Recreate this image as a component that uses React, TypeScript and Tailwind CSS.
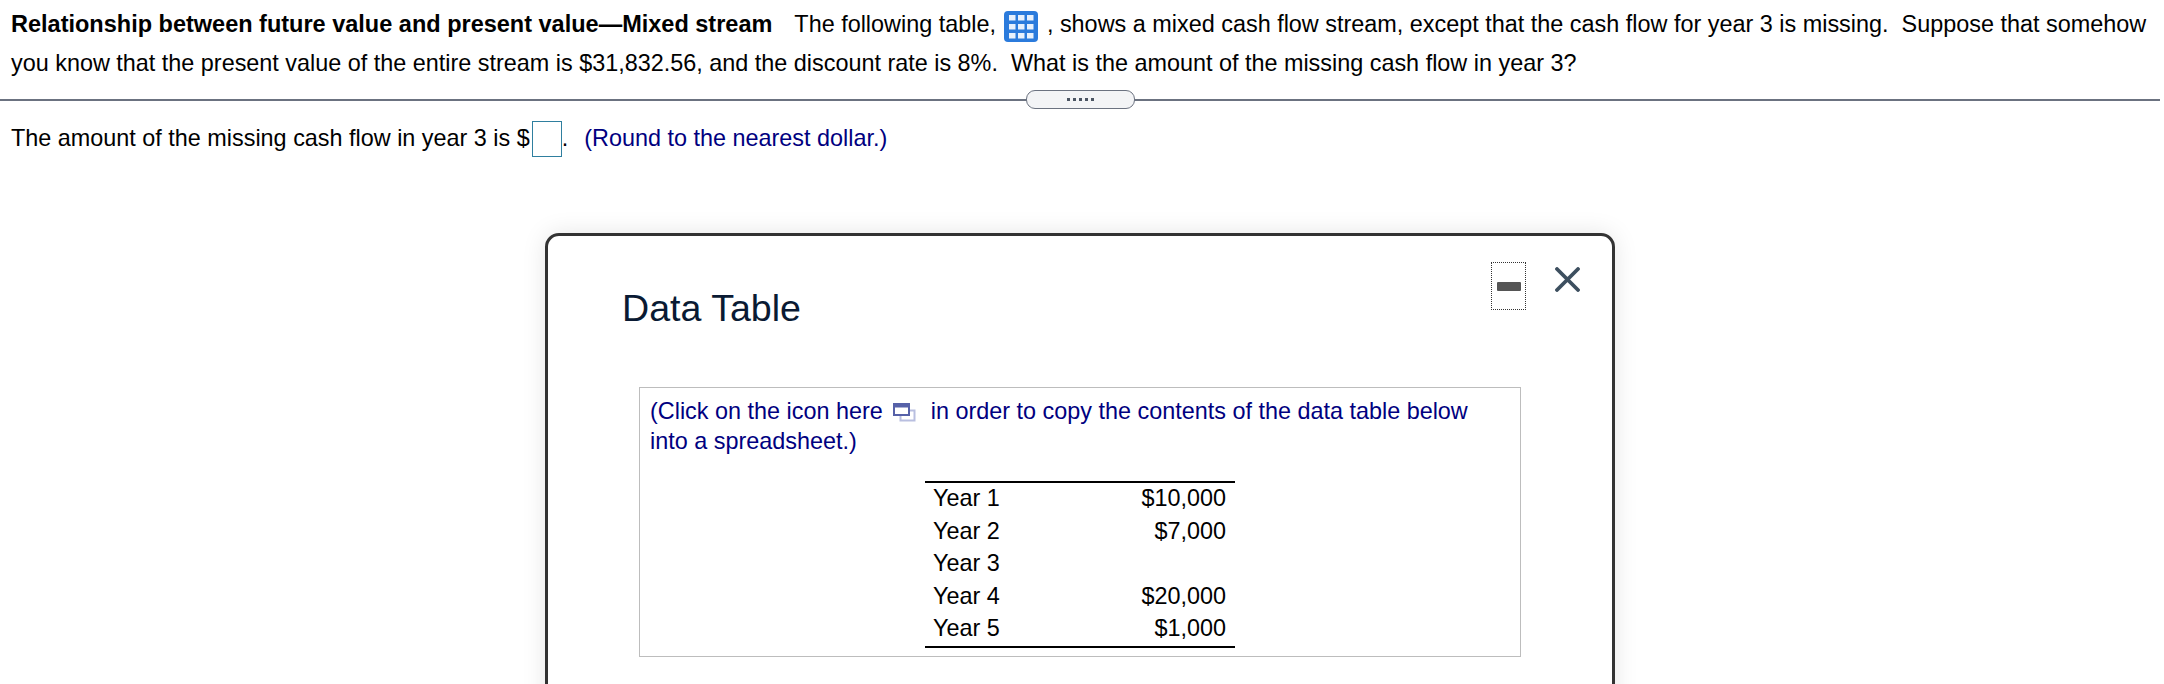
export default function App() {
  const rows = [
    ["Year 1", "$10,000"],
    ["Year 2", "$7,000"],
    ["Year 3", ""],
    ["Year 4", "$20,000"],
    ["Year 5", "$1,000"],
  ];
  return (
    <div className="h-[684px] w-[2164px] overflow-hidden bg-white font-['Liberation_Sans',Arial,sans-serif] text-[23.4px] text-black">
      <div className="whitespace-pre pl-[11px] pt-[5px] leading-[39px]">
        <div className="h-[39px]">
          <b className="text-[23.5px]">Relationship between future value and present value—Mixed stream</b>
          <span className="ml-[22px]">The following table,</span>
          <svg className="ml-[8px] mr-[9px] inline-block align-[-10px]" width="34" height="31" viewBox="0 0 34 31">
            <rect width="34" height="31" rx="4" fill="#2b7bdc" />
            {[4, 13, 22].map((y) =>
              [5, 14, 23].map((x) => <rect key={`${x}-${y}`} x={x} y={y} width="6.5" height="5.5" fill="#e8f1fc" />)
            )}
          </svg>
          <span className="text-[23.42px]">, shows a mixed cash flow stream, except that the cash flow for year 3 is missing.  Suppose that somehow</span>
        </div>
        <div className="h-[39px]">you know that the present value of the entire stream is $31,832.56, and the discount rate is 8%.  What is the amount of the missing cash flow in year 3?</div>
      </div>

      <div className="relative mt-[16px] mr-[4px] h-[2px] bg-[#6b7280]">
        <div className="absolute left-[1026px] top-[-9px] flex h-[19px] w-[109px] items-center justify-center gap-[3px] rounded-[9px] border border-[#6b7280] bg-[#f3f4f6]">
          {[0, 1, 2, 3, 4].map((i) => (
            <span key={i} className="h-[3px] w-[3px] bg-[#4b5563]" />
          ))}
        </div>
      </div>

      <div className="flex h-[36px] items-center pl-[11px] mt-[20px] whitespace-pre">
        <span>The amount of the missing cash flow in year 3 is $</span>
        <span className="ml-[2px] h-[36px] w-[30px] border border-[#2f7f9f] bg-white" />
        <span>.</span>
        <span className="ml-[16px] text-[#000080]">(Round to the nearest dollar.)</span>
      </div>

      <div className="ml-[545px] mt-[76px] h-[600px] w-[1070px] rounded-[14px] border-[3px] border-[#333333] bg-white shadow-[0_0_24px_rgba(0,0,0,0.1)]">
        <div className="flex h-[151px] items-start pl-[74px]">
          <h2 className="mt-[50px] w-[869px] text-[37.6px] leading-[44px] text-[#0a1a33]">Data Table</h2>
          <button className="mt-[26px] flex h-[48px] w-[35px] items-center justify-center border border-dotted border-[#333333]">
            <span className="h-[9px] w-[24px] rounded-[1px] bg-[#555555]" />
          </button>
          <svg className="ml-[29px] mt-[31px]" width="25" height="25" viewBox="0 0 25 25">
            <path d="M2 2 L23 23 M23 2 L2 23" stroke="#3d4f5f" strokeWidth="3.8" strokeLinecap="round" />
          </svg>
        </div>

        <div className="ml-[91px] h-[270px] w-[882px] border-[1.5px] border-[#bdbdbd] pl-[10px] pt-[8px]">
          <div className="text-[#000080] leading-[30px]">
            <div className="flex items-center whitespace-pre">
              <span>(Click on the icon here</span>
              <svg className="ml-[10px] mt-[3px]" width="23" height="19" viewBox="0 0 23 19">
                <rect x="7.5" y="7.5" width="14" height="10" fill="#fff" stroke="#b9bfe0" strokeWidth="2" />
                <rect x="1" y="1" width="15" height="11" fill="#fff" stroke="#5661a8" strokeWidth="2" />
                <rect x="1" y="1" width="15" height="3.5" fill="#5661a8" />
              </svg>
              <span className="ml-[15px]">in order to copy the contents of the data table below</span>
            </div>
            <div>into a spreadsheet.)</div>
          </div>
          <table className="ml-[275px] mt-[25px] w-[310px] border-y-2 border-black leading-[31.5px]">
            <tbody>
              {rows.map(([year, amount]) => (
                <tr key={year}>
                  <td className="pl-[8px] pb-[1px] text-left">{year}</td>
                  <td className="pr-[9px] pb-[1px] text-right">{amount}</td>
                </tr>
              ))}
            </tbody>
          </table>
        </div>
      </div>
    </div>
  );
}
